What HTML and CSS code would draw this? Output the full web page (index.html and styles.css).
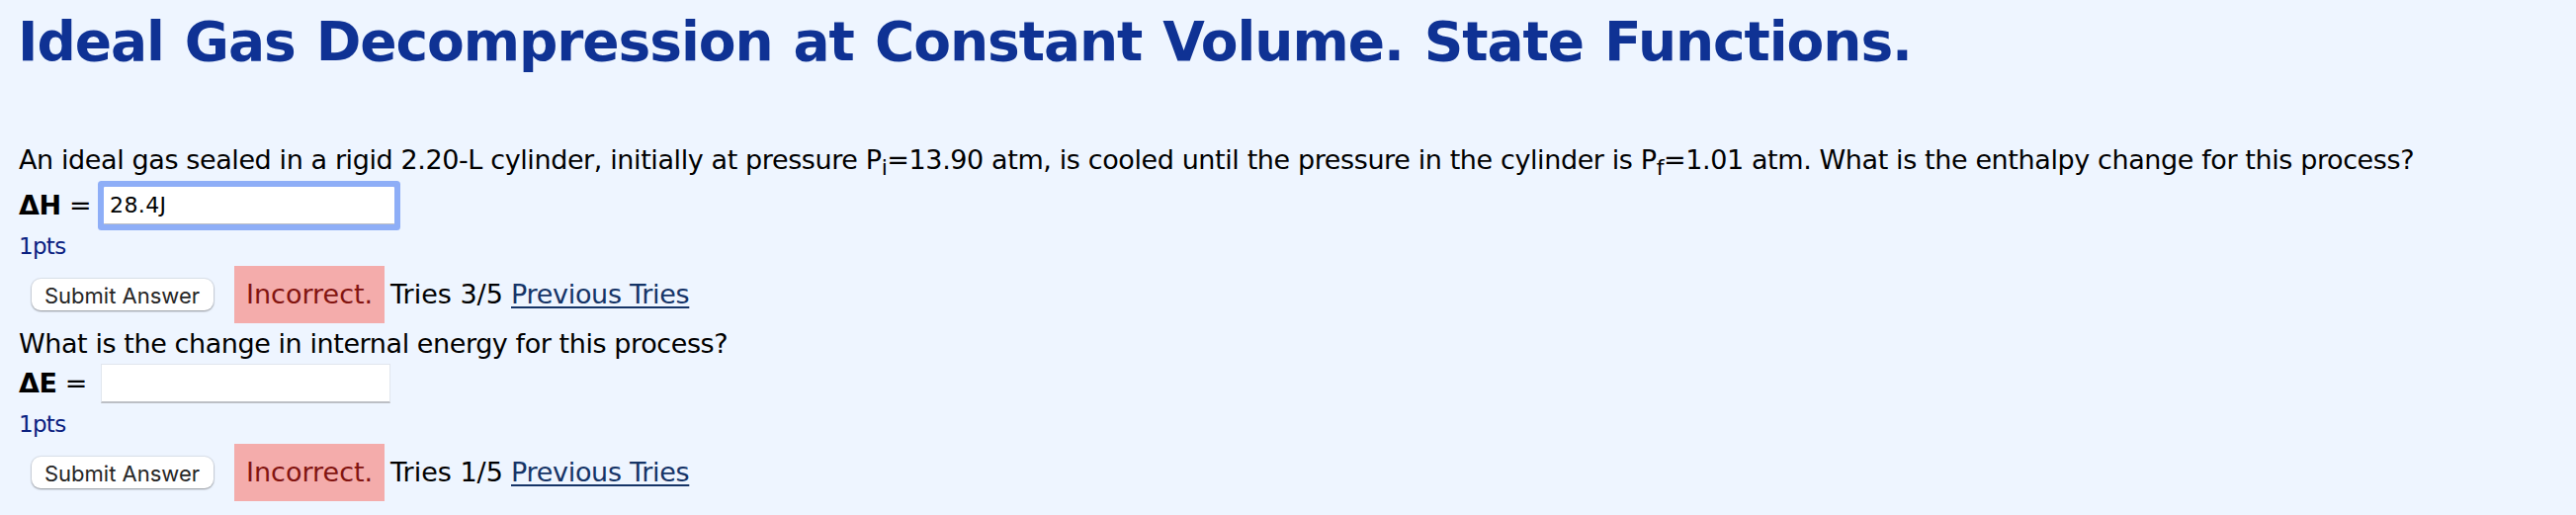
FILE: index.html
```html
<!DOCTYPE html>
<html lang="en">
<head>
<meta charset="utf-8">
<title>Ideal Gas Decompression</title>
<link rel="stylesheet" href="styles.css">
</head>
<body>
<h1 class="title"><span>Ideal Gas Decompression at Constant Volume. State Functions.</span></h1>
<main class="problem">
<p class="question question-first"><span>An ideal gas sealed in a rigid 2.20-L cylinder, initially at pressure P<sub>i</sub>=13.90 atm, is cooled until the pressure in the cylinder is P<sub>f</sub>=1.01 atm. What is the enthalpy change for this process?</span></p>
<div class="answer answer-first"><label class="label" for="dh"><b>ΔH</b> =</label><input class="field field-focus" id="dh" type="text" value="28.4J"></div>
<div class="points points-first"><span>1pts</span></div>
<div class="result result-first"><button class="submit" type="button"><span>Submit Answer</span></button><span class="status"><span>Incorrect.</span></span><span class="tries">Tries 3/5</span><a class="previous" href="#">Previous Tries</a></div>
<p class="question"><span>What is the change in internal energy for this process?</span></p>
<div class="answer"><label class="label" for="de"><b>ΔE</b> =</label><input class="field" id="de" type="text"></div>
<div class="points"><span>1pts</span></div>
<div class="result"><button class="submit" type="button"><span>Submit Answer</span></button><span class="status"><span>Incorrect.</span></span><span class="tries">Tries 1/5</span><a class="previous" href="#">Previous Tries</a></div>
</main>
</body>
</html>
```
FILE: styles.css
```css
* { box-sizing: border-box; }
html { height: 521px; overflow: hidden; }
body {
  margin: 0;
  background: #eef5ff;
  color: #000;
  font-family: Verdana, "DejaVu Sans", sans-serif;
  font-size: 27px;
}
.title {
  margin: 0;
  padding-left: 18px;
  height: 84px;
  line-height: 84px;
  font-size: 55px;
  letter-spacing: -1.07px;
  word-spacing: 3px;
  color: #0f3294;
  white-space: nowrap;
}
.problem { padding: 56px 0 0 19px; }
.question { margin: 0; height: 38px; line-height: 37px; letter-spacing: -.42px; white-space: nowrap; }
.question-first { height: 44px; line-height: 43px; letter-spacing: -.395px; }
sub { font-size: 22px; line-height: 0; }
.answer { display: flex; align-items: center; height: 42px; }
.answer-first { height: 48px; }
.label { width: 83px; padding-bottom: 1px; letter-spacing: -.4px; white-space: pre; }
.field {
  width: 293px;
  height: 40px;
  border: 1px solid #e1e6ee;
  border-bottom: 2px solid #bcbfc5;
  padding: 0 6px;
  background: #fff;
  font: 22px Verdana, "DejaVu Sans", sans-serif;
  letter-spacing: .4px;
  outline: none;
}
.field-focus {
  width: 294px;
  height: 38px;
  margin-left: 3px;
  border: 0;
  border-bottom: 1px solid #bcbfc5;
  border-radius: 1px;
  box-shadow: 0 0 0 6px #8eaef7;
}
.points { height: 40px; line-height: 40px; font-size: 23px; letter-spacing: -.7px; color: #0a2080; }
.points-first { height: 35px; line-height: 35px; }
.result { display: flex; align-items: center; height: 58px; white-space: nowrap; }
.result-first { height: 62px; }
.submit {
  width: 184px;
  height: 32px;
  margin: 0 21px 0 13px;
  padding: 2px 1px 0 0;
  border: 0;
  border-radius: 9px;
  background: #fff;
  box-shadow: 0 0 1px 1px rgba(0, 0, 0, .08), 0 1px 2px rgba(0, 0, 0, .35);
  color: #262626;
  font: 22px/29px Inter, sans-serif;
}
.status {
  width: 152px;
  height: 58px;
  padding-left: 12px;
  line-height: 57px;
  background: #f4acab;
  color: #821410;
}
.tries { width: 122px; margin-left: 6px; padding-bottom: 1px; }
.previous {
  padding-bottom: 1px;
  letter-spacing: -.3px;
  color: #153467;
  text-decoration-thickness: 2px;
  text-underline-offset: 3px;
}
```
